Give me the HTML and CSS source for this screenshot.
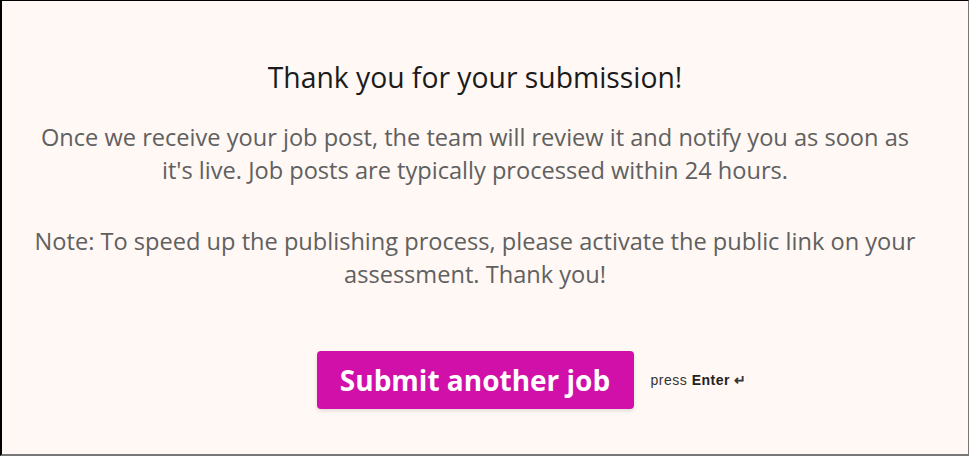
FILE: index.html
```html
<!DOCTYPE html>
<html lang="en">
<head>
    <meta charset="UTF-8">
    <meta name="viewport" content="width=device-width, initial-scale=1.0">
    <title>Submission received</title>
    <link rel="stylesheet" href="styles.css">
</head>
<body>

    <div class="frame">
        <div class="container">
            <h2>Thank you for your submission!</h2>
            <p class="message">Once we receive your job post, the team will review it and notify you as soon as it's live. Job posts are typically processed within 24 hours.</p>
            <p class="message">Note: To speed up the publishing process, please activate the public link on your assessment. Thank you!</p>

            <div class="actions">
                <span></span>
                <button class="submit-btn">Submit another job</button>
                <span class="hint">press <b>Enter</b> <span class="enter-key">&#8629;</span></span>
            </div>
        </div>
    </div>

</body>
</html>
```

FILE: styles.css
```css
html, body {
    margin: 0;
    padding: 0;
    height: 100%;
}
body {
    font-family: 'Open Sans', 'Noto Sans', sans-serif;
    background: #fff8f4;
}
.frame {
    box-sizing: border-box;
    height: 100%;
    border-top: 1px solid #000;
    border-left: 2px solid #000;
    border-right: 1px solid #777;
    border-bottom: 2px solid #777;
    padding: 0 20px 0 0;
}
.container {
    text-align: center;
    padding-top: 58px;
}
h2 {
    font-size: 28.3px;
    line-height: 36px;
    font-weight: 400;
    color: #1b1b1b;
    margin: 0 0 26px;
}
.message {
    font-size: 23.6px;
    line-height: 33px;
    color: #606060;
    max-width: 884px;
    margin: 0 auto 38px;
}
.actions {
    display: grid;
    grid-template-columns: 1fr auto 1fr;
    align-items: center;
    margin-top: 60px;
}
.submit-btn {
    background-color: #d110a9;
    color: #fff;
    border: none;
    border-radius: 4px;
    font-family: inherit;
    font-size: 28px;
    font-weight: 700;
    padding: 0 23px;
    height: 58px;
    width: 317px;
    box-shadow: 0 2px 4px rgba(0, 0, 0, 0.12);
    cursor: pointer;
}
.hint {
    justify-self: start;
    margin-left: 17px;
    font-family: 'Liberation Sans', Arial, sans-serif;
    font-size: 14px;
    letter-spacing: 0.5px;
    color: #333;
}
.hint b {
    color: #222;
}
.enter-key {
    font-size: 14px;
    font-weight: 700;
}
```
